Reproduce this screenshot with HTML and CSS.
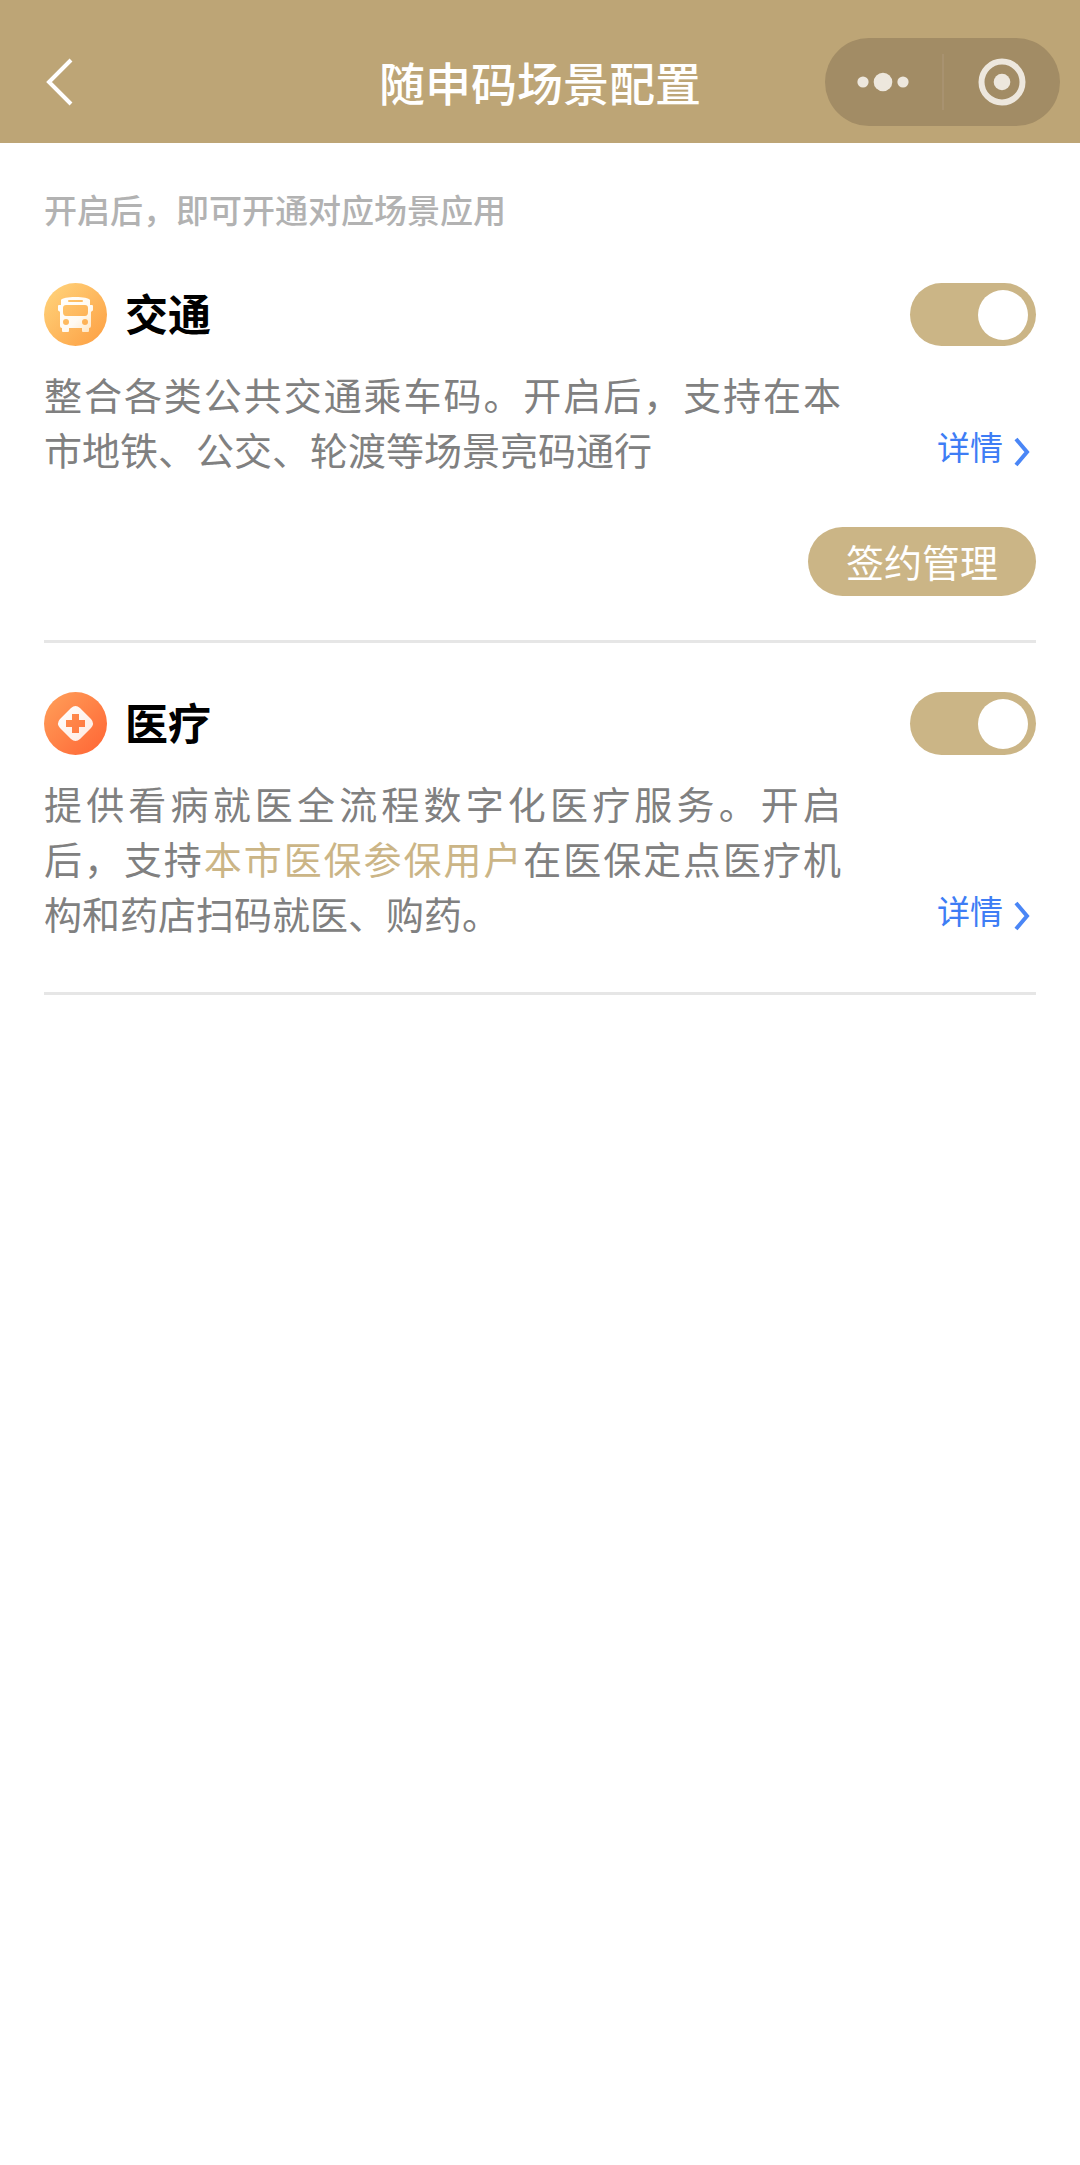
FILE: index.html
```html
<!DOCTYPE html>
<html lang="zh-CN">
<head>
<meta charset="utf-8">
<meta name="viewport" content="width=device-width, initial-scale=1">
<title>随申码场景配置</title>
<link rel="stylesheet" href="styles.css">
</head>
<body>
<header class="navbar">
  <button class="back" type="button" aria-label="返回">
    <svg width="28" height="48" viewBox="0 0 28 48" fill="none" stroke="#fff" stroke-width="4"><path d="M25 2 3 24l22 22"/></svg>
  </button>
  <h1 class="navbar-title">随申码场景配置</h1>
  <div class="capsule">
    <button class="capsule-button" type="button" aria-label="更多">
      <svg width="52" height="20" viewBox="0 0 52 20" fill="#ede7dd"><circle cx="6" cy="10" r="5.600"/><circle cx="26" cy="10" r="9.300"/><circle cx="46" cy="10" r="5.600"/></svg>
    </button>
    <button class="capsule-button capsule-close" type="button" aria-label="关闭">
      <svg width="48" height="48" viewBox="0 0 48 48"><circle cx="24" cy="24" r="20.500" fill="none" stroke="#ede7dd" stroke-width="6"/><circle cx="24" cy="24" r="8.300" fill="#ede7dd"/></svg>
    </button>
  </div>
</header>
<main class="content">
  <p class="hint">开启后，即可开通对应场景应用</p>

  <section class="scene">
    <div class="scene-head">
      <svg class="scene-icon" viewBox="0 0 63 63">
        <defs>
          <linearGradient id="bus-bg" x1="0.100" y1="0.100" x2="0.900" y2="0.900"><stop offset="0" stop-color="#ffd078"/><stop offset="1" stop-color="#fda347"/></linearGradient>
          <linearGradient id="bus-body" x1="0" y1="0" x2="1" y2="1"><stop offset="0" stop-color="#fff"/><stop offset=".6" stop-color="#fffaf2"/><stop offset="1" stop-color="#ffe3bd"/></linearGradient>
        </defs>
        <circle cx="31.500" cy="31.500" r="31.500" fill="url(#bus-bg)"/>
        <path fill="url(#bus-body)" fill-rule="evenodd" d="M17 17c1-2 7-3 14.500-3s13.500 1 14.500 3v5h2q1 0 1 1v4q0 1-1 1l-1 1v14q0 2-2 2v3q0 1-1 1h-5q-1 0-1-1v-3H25v3q0 1-1 1h-5q-1 0-1-1v-3q-2 0-2-2V29l-1-1q-1 0-1-1v-4q0-1 1-1h2zM25 17q-1 0-1 1t1 1h13q1 0 1-1t-1-1zM22 22q-3 0-3 3v4q0 4 3 4h19q3 0 3-4v-4q0-3-3-3zM22 36a3 3 0 1 0 0 6 3 3 0 0 0 0-6zM41 36a3 3 0 1 0 0 6 3 3 0 0 0 0-6z"/>
      </svg>
      <h2 class="scene-title"><label for="traffic">交通</label></h2>
      <input class="switch" id="traffic" type="checkbox" role="switch" checked>
    </div>
    <div class="scene-body">
      <p class="scene-text">整合各类公共交通乘车码。开启后，支持在本市地铁、公交、轮渡等场景亮码通行</p>
      <a class="detail" href="#traffic">详情<svg class="detail-arrow" width="16" height="30" viewBox="0 0 16 30" fill="none" stroke="#4a86f6" stroke-width="4"><path d="m2 2 11 13L2 28"/></svg></a>
    </div>
    <div class="scene-actions">
      <button class="manage" type="button">签约管理</button>
    </div>
  </section>

  <section class="scene">
    <div class="scene-head">
      <svg class="scene-icon" viewBox="0 0 63 63">
        <defs>
          <linearGradient id="med-bg" x1="0.100" y1="0.100" x2="0.900" y2="0.900"><stop offset="0" stop-color="#ff9a56"/><stop offset="1" stop-color="#ff6a38"/></linearGradient>
          <linearGradient id="med-body" x1="0" y1="0" x2="1" y2="1"><stop offset="0" stop-color="#fff"/><stop offset="1" stop-color="#ffe9df"/></linearGradient>
        </defs>
        <circle cx="31.500" cy="31.500" r="31.500" fill="url(#med-bg)"/>
        <path fill="url(#med-body)" fill-rule="evenodd" d="M27 16q4.500-4 9 0l11 11q4 4.500 0 9L36 47q-4.500 4-9 0L16 36q-4-4.500 0-9zM28 22v6h-6v7h6v6h7v-6h6v-7h-6v-6z"/>
      </svg>
      <h2 class="scene-title"><label for="medical">医疗</label></h2>
      <input class="switch" id="medical" type="checkbox" role="switch" checked>
    </div>
    <div class="scene-body">
      <p class="scene-text">提供看病就医全流程数字化医疗服务。开启后，支持<span class="accent">本市医保参保用户</span>在医保定点医疗机构和药店扫码就医、购药。</p>
      <a class="detail" href="#medical">详情<svg class="detail-arrow" width="16" height="30" viewBox="0 0 16 30" fill="none" stroke="#4a86f6" stroke-width="4"><path d="m2 2 11 13L2 28"/></svg></a>
    </div>
  </section>
</main>
</body>
</html>
```
FILE: styles.css
```css
* {
  box-sizing: border-box;
}

body {
  margin: 0;
  background: #fff;
  color: #000;
  font-family: "Noto Sans CJK SC", sans-serif;
}

h1,
h2,
p {
  margin: 0;
}

button {
  padding: 0;
  border: 0;
  background: none;
  font-family: inherit;
  cursor: pointer;
}

svg {
  display: block;
}

.navbar {
  display: grid;
  grid-template-columns: 1fr auto 1fr;
  align-items: center;
  padding: 38px 20px 17px 44px;
  background: #bda576;
}

.back {
  justify-self: start;
  padding: 0 2px;
}

.navbar-title {
  padding: 0 24px 2px 0;
  color: #fff;
  font-size: 46px;
  font-weight: 500;
  line-height: 60px;
}

.capsule {
  justify-self: end;
  display: flex;
  align-items: center;
  width: 235px;
  height: 88px;
  border-radius: 44px;
  background: #a28c65;
}

.capsule-button {
  display: flex;
  flex: 1;
  align-items: center;
  justify-content: center;
  height: 56px;
}

.capsule-close {
  border-left: 2px solid #a89270;
}

.content {
  padding: 42px 44px;
}

.hint {
  color: #b2b2b2;
  font-size: 33px;
  font-weight: 500;
  line-height: 49px;
}

.scene {
  padding: 49px 0 44px;
  border-bottom: 3px solid #e6e6e6;
}

.scene-head {
  display: flex;
  align-items: center;
  gap: 18px;
}

.scene-icon {
  width: 63px;
  height: 63px;
}

.scene-title {
  flex: 1;
  padding-bottom: 4px;
  font-size: 43px;
  font-weight: 700;
  line-height: 59px;
}

.switch {
  display: flex;
  align-items: center;
  width: 126px;
  height: 63px;
  margin: 0;
  padding: 0 8px;
  border-radius: 32px;
  background: #ccc;
  appearance: none;
  cursor: pointer;
}

.switch::before {
  width: 50px;
  height: 50px;
  border-radius: 50%;
  background: #fff;
  content: "";
}

.switch:checked {
  justify-content: flex-end;
  background: #cbb586;
}

.scene-body {
  display: flex;
  align-items: flex-end;
  justify-content: space-between;
  padding: 20px 0 8px;
}

.scene-text {
  flex: 0 1 797px;
  color: #808080;
  font-size: 38px;
  line-height: 55px;
  text-align: justify;
}

.accent {
  color: #cbb586;
}

.detail {
  display: flex;
  align-items: center;
  gap: 11px;
  padding: 0 6px 2px 0;
  color: #3e7df5;
  font-size: 33px;
  line-height: 55px;
  text-decoration: none;
}

.detail-arrow {
  margin-top: 10px;
}

.scene-actions {
  display: flex;
  justify-content: flex-end;
  padding-top: 43px;
}

.manage {
  padding: 0 38px 2px;
  border-radius: 35px;
  background: #cbb586;
  color: #fff;
  font-size: 38px;
  line-height: 67px;
}
```
